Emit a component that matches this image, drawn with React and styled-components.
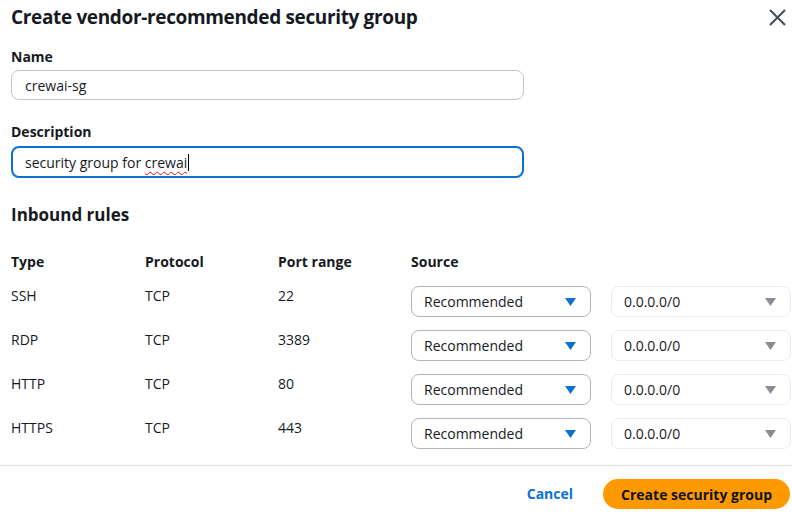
import styled, { createGlobalStyle } from "styled-components";

const GlobalStyle = createGlobalStyle`
  body {
    margin: 0;
    background: #ffffff;
    font-family: "Open Sans", "Noto Sans", sans-serif;
    color: #16191f;
  }
`;

const rules = [
  { type: "SSH", protocol: "TCP", port: "22" },
  { type: "RDP", protocol: "TCP", port: "3389" },
  { type: "HTTP", protocol: "TCP", port: "80" },
  { type: "HTTPS", protocol: "TCP", port: "443" },
];

const Caret = ({ color }) => (
  <svg width="11" height="8" viewBox="0 0 11 8">
    <polygon points="0,0 11,0 5.5,8" fill={color} />
  </svg>
);

const CloseIcon = () => (
  <svg width="17" height="17" viewBox="0 0 17 17">
    <path d="M1 1 L16 16 M16 1 L1 16" stroke="#414d5c" strokeWidth="2" fill="none" />
  </svg>
);

export default function App() {
  return (
    <Modal>
      <GlobalStyle />
      <Header>
        <Title>Create vendor-recommended security group</Title>
        <CloseButton>
          <CloseIcon />
        </CloseButton>
      </Header>

      <Field gap={14}>
        <Label>Name</Label>
        <Input>crewai-sg</Input>
      </Field>

      <Field gap={20}>
        <Label>Description</Label>
        <Input focused>
          security group for <Misspelled>crewai</Misspelled>
          <TextCursor />
        </Input>
      </Field>

      <SectionTitle>Inbound rules</SectionTitle>

      <RulesGrid>
        <HeadCell>Type</HeadCell>
        <HeadCell>Protocol</HeadCell>
        <HeadCell>Port range</HeadCell>
        <HeadCell>Source</HeadCell>
        <HeadCell />
        {rules.map((r) => (
          <Row key={r.type}>
            <Cell>{r.type}</Cell>
            <Cell>{r.protocol}</Cell>
            <Cell>{r.port}</Cell>
            <Select>
              Recommended
              <Caret color="#0972d3" />
            </Select>
            <Select disabled>
              0.0.0.0/0
              <Caret color="#8c8c94" />
            </Select>
          </Row>
        ))}
      </RulesGrid>

      <Footer>
        <LinkButton>Cancel</LinkButton>
        <PrimaryButton>Create security group</PrimaryButton>
      </Footer>
    </Modal>
  );
}

const Modal = styled.div`
  width: 792px;
  height: 514px;
  overflow: hidden;
  display: flex;
  flex-direction: column;
`;

const Header = styled.div`
  display: flex;
  justify-content: space-between;
  align-items: flex-start;
  padding: 3px 6px 0 11px;
`;

const Title = styled.h2`
  margin: 0;
  font-size: 19px;
  line-height: 28px;
  font-weight: 700;
  letter-spacing: -0.35px;
`;

const CloseButton = styled.div`
  padding-top: 6px;
  line-height: 0;
`;

const Field = styled.div`
  padding-left: 11px;
  margin-top: ${(p) => p.gap}px;
`;

const Label = styled.div`
  font-size: 14px;
  font-weight: 700;
  line-height: 20px;
  margin-bottom: 5px;
  margin-top: 2px;
`;

const Input = styled.div`
  box-sizing: border-box;
  width: 513px;
  height: ${(p) => (p.focused ? "32px" : "30px")};
  margin-top: ${(p) => (p.focused ? "-1px" : "-2px")};
  border: ${(p) => (p.focused ? "2px solid #0972d3" : "1px solid #c6c6cd")};
  border-radius: 8px;
  padding-left: ${(p) => (p.focused ? "12px" : "13px")};
  display: flex;
  align-items: center;
  font-size: 14px;
  color: #16191f;
  white-space: pre;
`;

const Misspelled = styled.span`
  text-decoration: underline wavy #d91515;
  text-decoration-thickness: 1px;
  text-underline-offset: 3px;
`;

const TextCursor = styled.span`
  display: inline-block;
  width: 1px;
  height: 17px;
  background: #000;
  margin-left: 1px;
`;

const SectionTitle = styled.h3`
  margin: 24px 0 0 11px;
  font-size: 17px;
  line-height: 26px;
  font-weight: 700;
`;

const RulesGrid = styled.div`
  display: grid;
  grid-template-columns: 134px 133px 133px 200px 180px;
  padding-left: 11px;
  margin-top: 24px;
`;

const HeadCell = styled.div`
  font-size: 14px;
  font-weight: 700;
  line-height: 20px;
  height: 34px;
`;

const Row = styled.div`
  display: contents;
`;

const Cell = styled.div`
  font-size: 14px;
  line-height: 20px;
  height: 44px;
  box-sizing: border-box;
`;

const Select = styled.div`
  box-sizing: border-box;
  width: 180px;
  height: 31px;
  border: 1px solid ${(p) => (p.disabled ? "#e9ebed" : "#b4b4bb")};
  border-radius: 8px;
  display: flex;
  align-items: center;
  justify-content: space-between;
  padding: 0 14px 0 12px;
  font-size: 14px;
  color: #16191f;
`;

const Footer = styled.div`
  margin-top: auto;
  border-top: 1px solid #dcdcde;
  height: 49px;
  flex-shrink: 0;
  box-sizing: border-box;
  display: flex;
  align-items: flex-start;
  justify-content: flex-end;
  gap: 30px;
  padding: 13px 2px 0 0;
`;

const LinkButton = styled.div`
  color: #0972d3;
  font-size: 14px;
  font-weight: 700;
  line-height: 30px;
`;

const PrimaryButton = styled.div`
  background: #ff9900;
  color: #0f141a;
  font-size: 14px;
  font-weight: 700;
  height: 30px;
  padding: 0 18px;
  border-radius: 16px;
  display: flex;
  align-items: center;
`;
